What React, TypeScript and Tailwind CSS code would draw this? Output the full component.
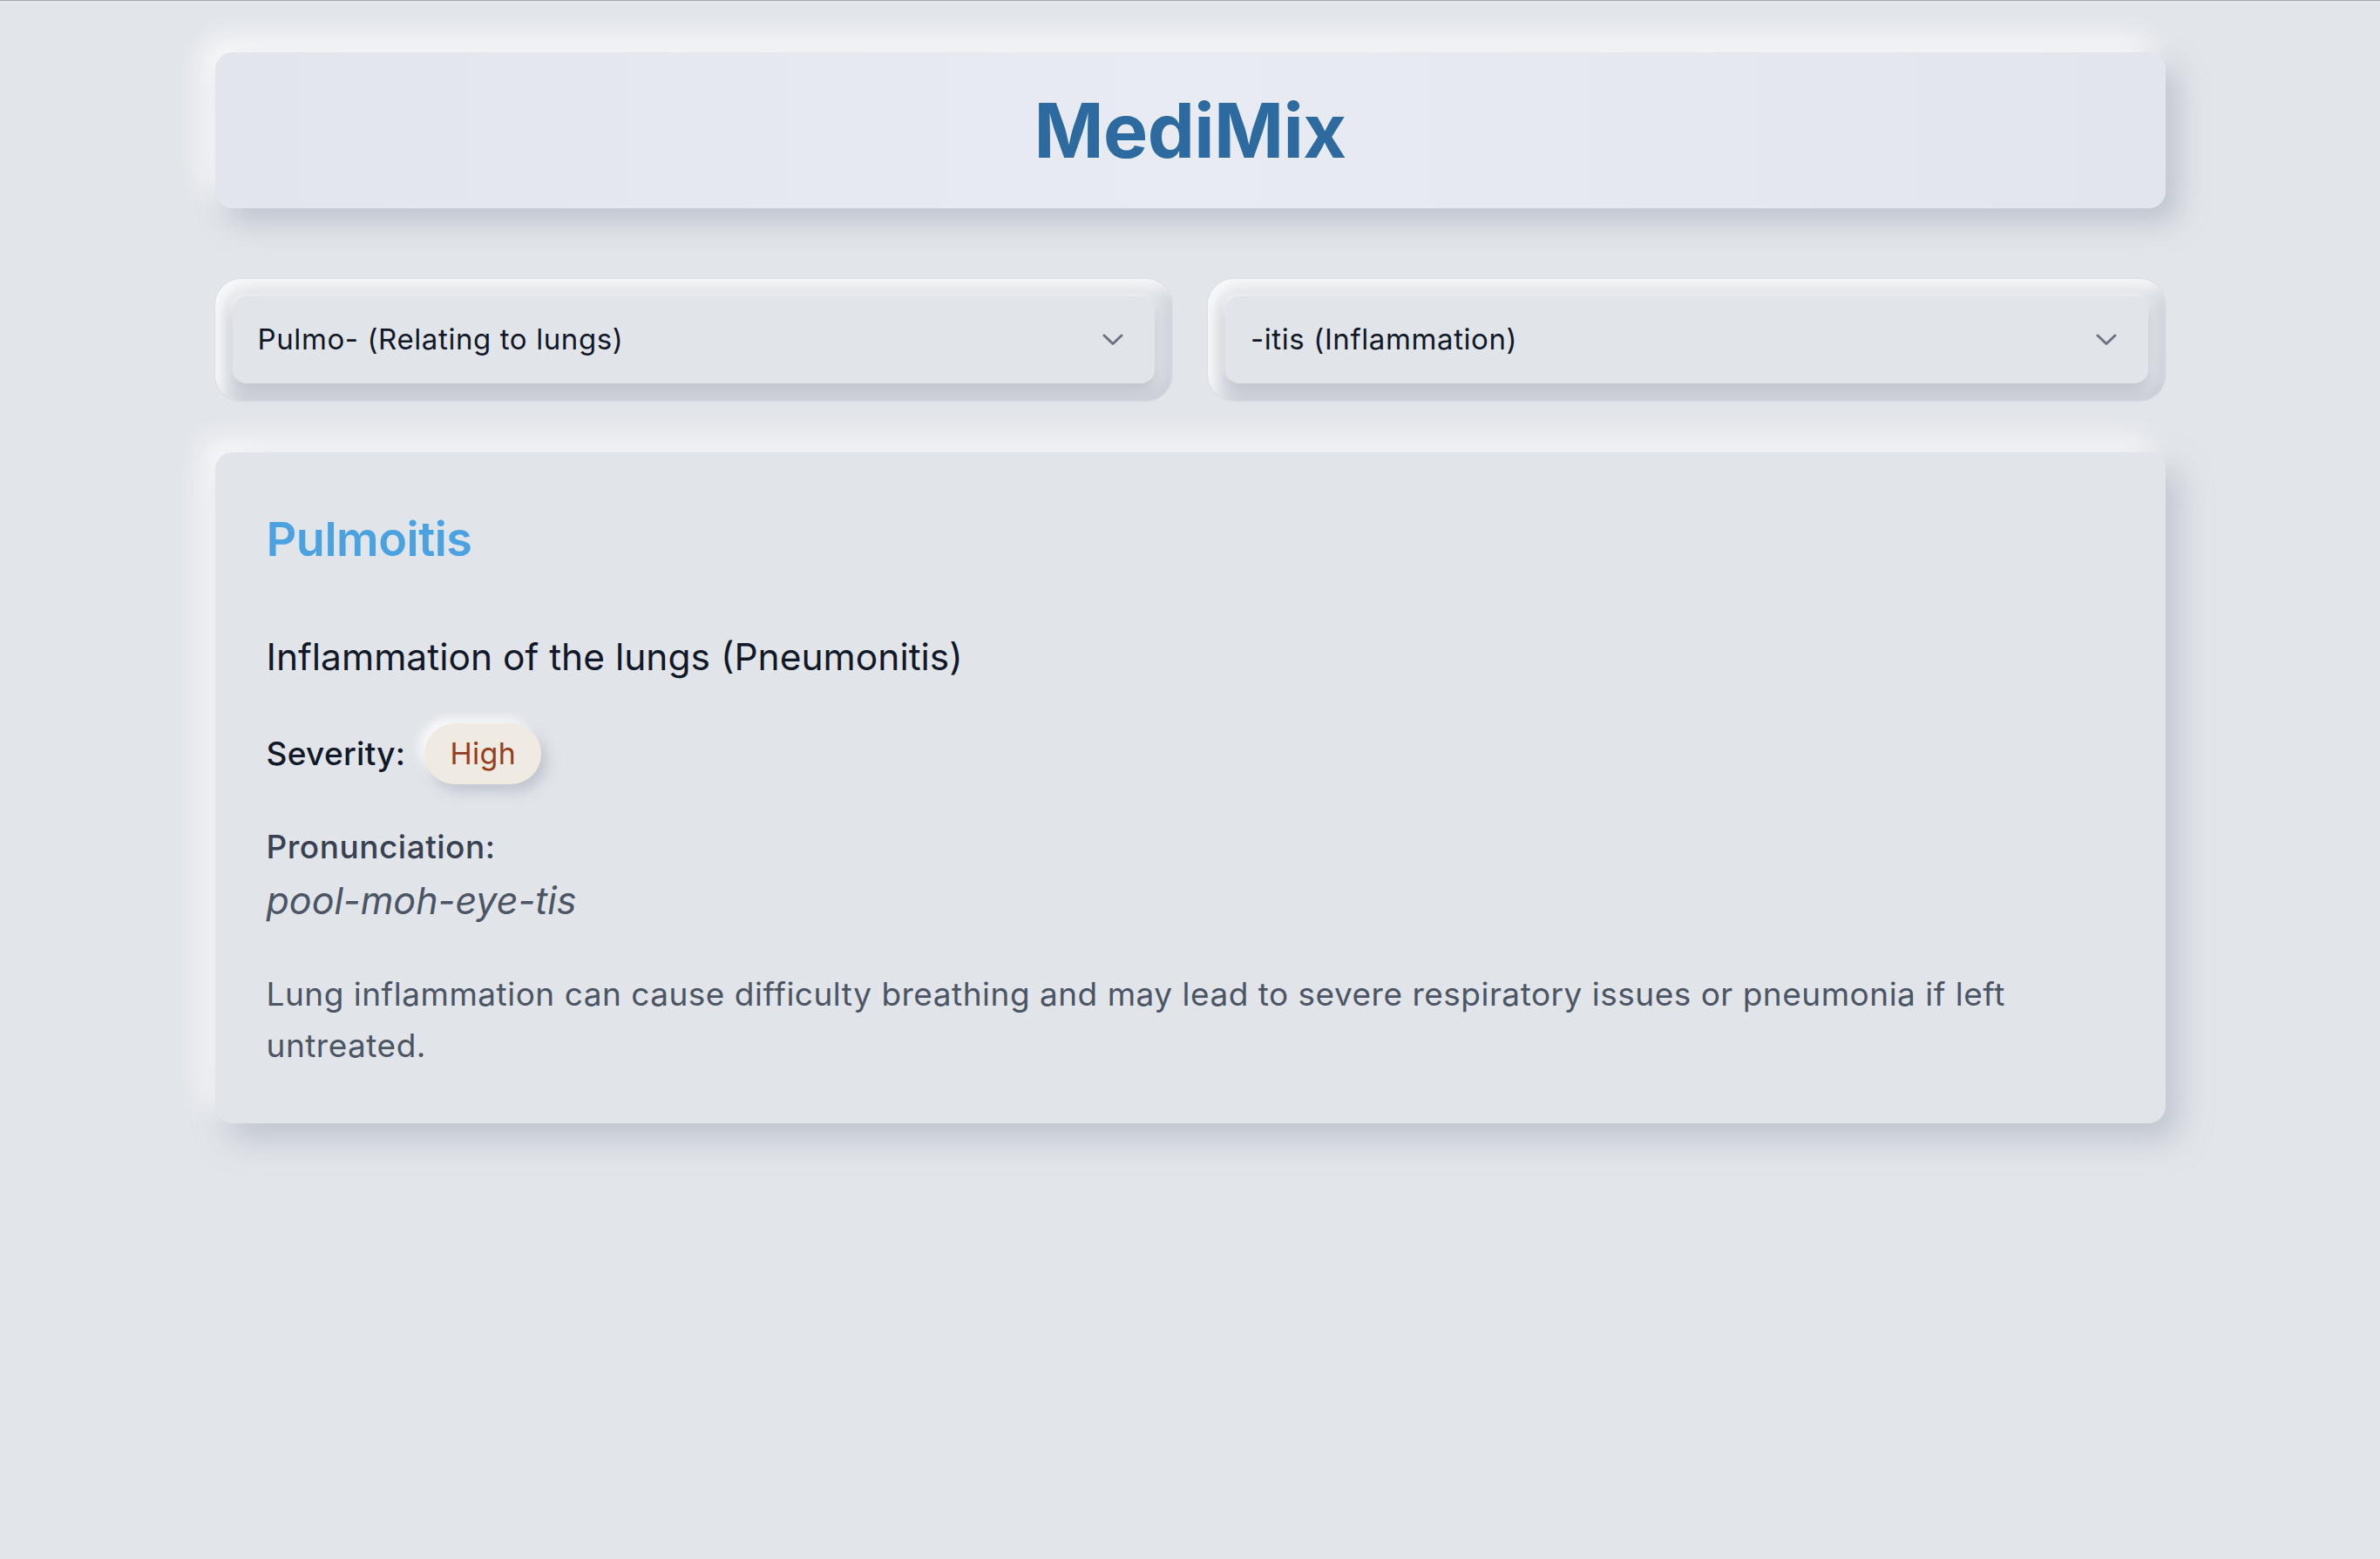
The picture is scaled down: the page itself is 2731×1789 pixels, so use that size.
import React from "react";

function Chevron() {
  return (
    <svg
      width="24"
      height="14"
      viewBox="0 0 24 14"
      fill="none"
      className="pointer-events-none absolute right-[36px] top-1/2 -translate-y-1/2"
    >
      <path d="M2 2 L12 11.5 L22 2" stroke="#6b7280" strokeWidth="3" strokeLinecap="round" strokeLinejoin="round" />
    </svg>
  );
}

function Picker({ value, options }: { value: string; options: string[] }) {
  return (
    <div className="rounded-[30px] bg-[#e2e5ea] p-[20px] shadow-[inset_8px_8px_14px_rgba(255,255,255,0.75),inset_-8px_-8px_14px_rgba(163,170,184,0.35),0_0_0_1px_rgba(210,214,222,0.4)]">
      <div className="relative">
        <select
          defaultValue={value}
          className="h-[100px] w-full appearance-none rounded-[16px] bg-[#e1e4e9] pl-[29px] pr-[80px] text-[33px] tracking-[0.6px] text-[#111827] outline-none shadow-[0_10px_16px_rgba(150,156,168,0.45),-2px_-2px_6px_rgba(255,255,255,0.6)]"
        >
          {options.map((o) => (
            <option key={o} value={o}>
              {o}
            </option>
          ))}
        </select>
        <Chevron />
      </div>
    </div>
  );
}

export default function App() {
  return (
    <div
      className="min-h-screen border-t border-[#a3a7ae] bg-[#e2e5ea] pb-[100px]"
      style={{ fontFamily: "Inter, 'Noto Sans', 'Liberation Sans', sans-serif" }}
    >
      <div className="mx-auto w-[2238px] pt-[59px]">
        <header className="flex h-[179px] items-center justify-center rounded-[20px] bg-linear-to-r from-[#e2e6ec] via-[#e8ebf1] to-[#e2e5eb] shadow-[14px_16px_32px_rgba(160,168,182,0.55),-14px_-16px_32px_rgba(255,255,255,0.85)]">
          <h1 className="text-[86px] font-bold leading-none tracking-[-0.6px] text-[#2c6a9f]">MediMix</h1>
        </header>

        <div className="mt-[81px] grid grid-cols-2 gap-[41px]">
          <Picker
            value="Pulmo- (Relating to lungs)"
            options={["Pulmo- (Relating to lungs)", "Cardio- (Relating to heart)", "Gastro- (Relating to stomach)"]}
          />
          <Picker
            value="-itis (Inflammation)"
            options={["-itis (Inflammation)", "-ology (Study of)", "-ectomy (Surgical removal)"]}
          />
        </div>

        <section className="mt-[59px] rounded-[20px] bg-[#e1e4e9] px-[59px] pt-[66px] pb-[60px] shadow-[14px_18px_36px_rgba(160,168,182,0.55),-14px_-14px_32px_rgba(255,255,255,0.85)]">
          <h2 className="text-[54px] font-semibold leading-[68px] tracking-[-0.5px] text-[#4aa3e0]">Pulmoitis</h2>
          <p className="mt-[73px] text-[42.5px] leading-[56px] text-[#111827]">Inflammation of the lungs (Pneumonitis)</p>
          <div className="mt-[48px] flex h-[70px] items-center gap-[22px]">
            <span className="text-[37px] font-medium leading-[50px] tracking-[0.3px] text-[#111827]">Severity:</span>
            <span className="flex h-[70px] items-center rounded-full bg-[#f0ebe2] px-[29px] text-[34px] leading-none tracking-[0.3px] text-[#983d1d] shadow-[6px_8px_14px_rgba(160,168,182,0.5),-6px_-6px_12px_rgba(255,255,255,0.85)]">
              High
            </span>
          </div>
          <div className="mt-[47px]">
            <p className="text-[37px] font-medium leading-[50px] tracking-[0.5px] text-[#374151]">Pronunciation:</p>
            <p className="mt-[6px] text-[43px] italic leading-[60px] text-[#4b5563]">pool-moh-eye-tis</p>
          </div>
          <p className="mt-[48px] text-[37px] leading-[59px] tracking-[0.5px] text-[#4b5563]">
            Lung inflammation can cause difficulty breathing and may lead to severe respiratory issues or pneumonia if left untreated.
          </p>
        </section>
      </div>
    </div>
  );
}
